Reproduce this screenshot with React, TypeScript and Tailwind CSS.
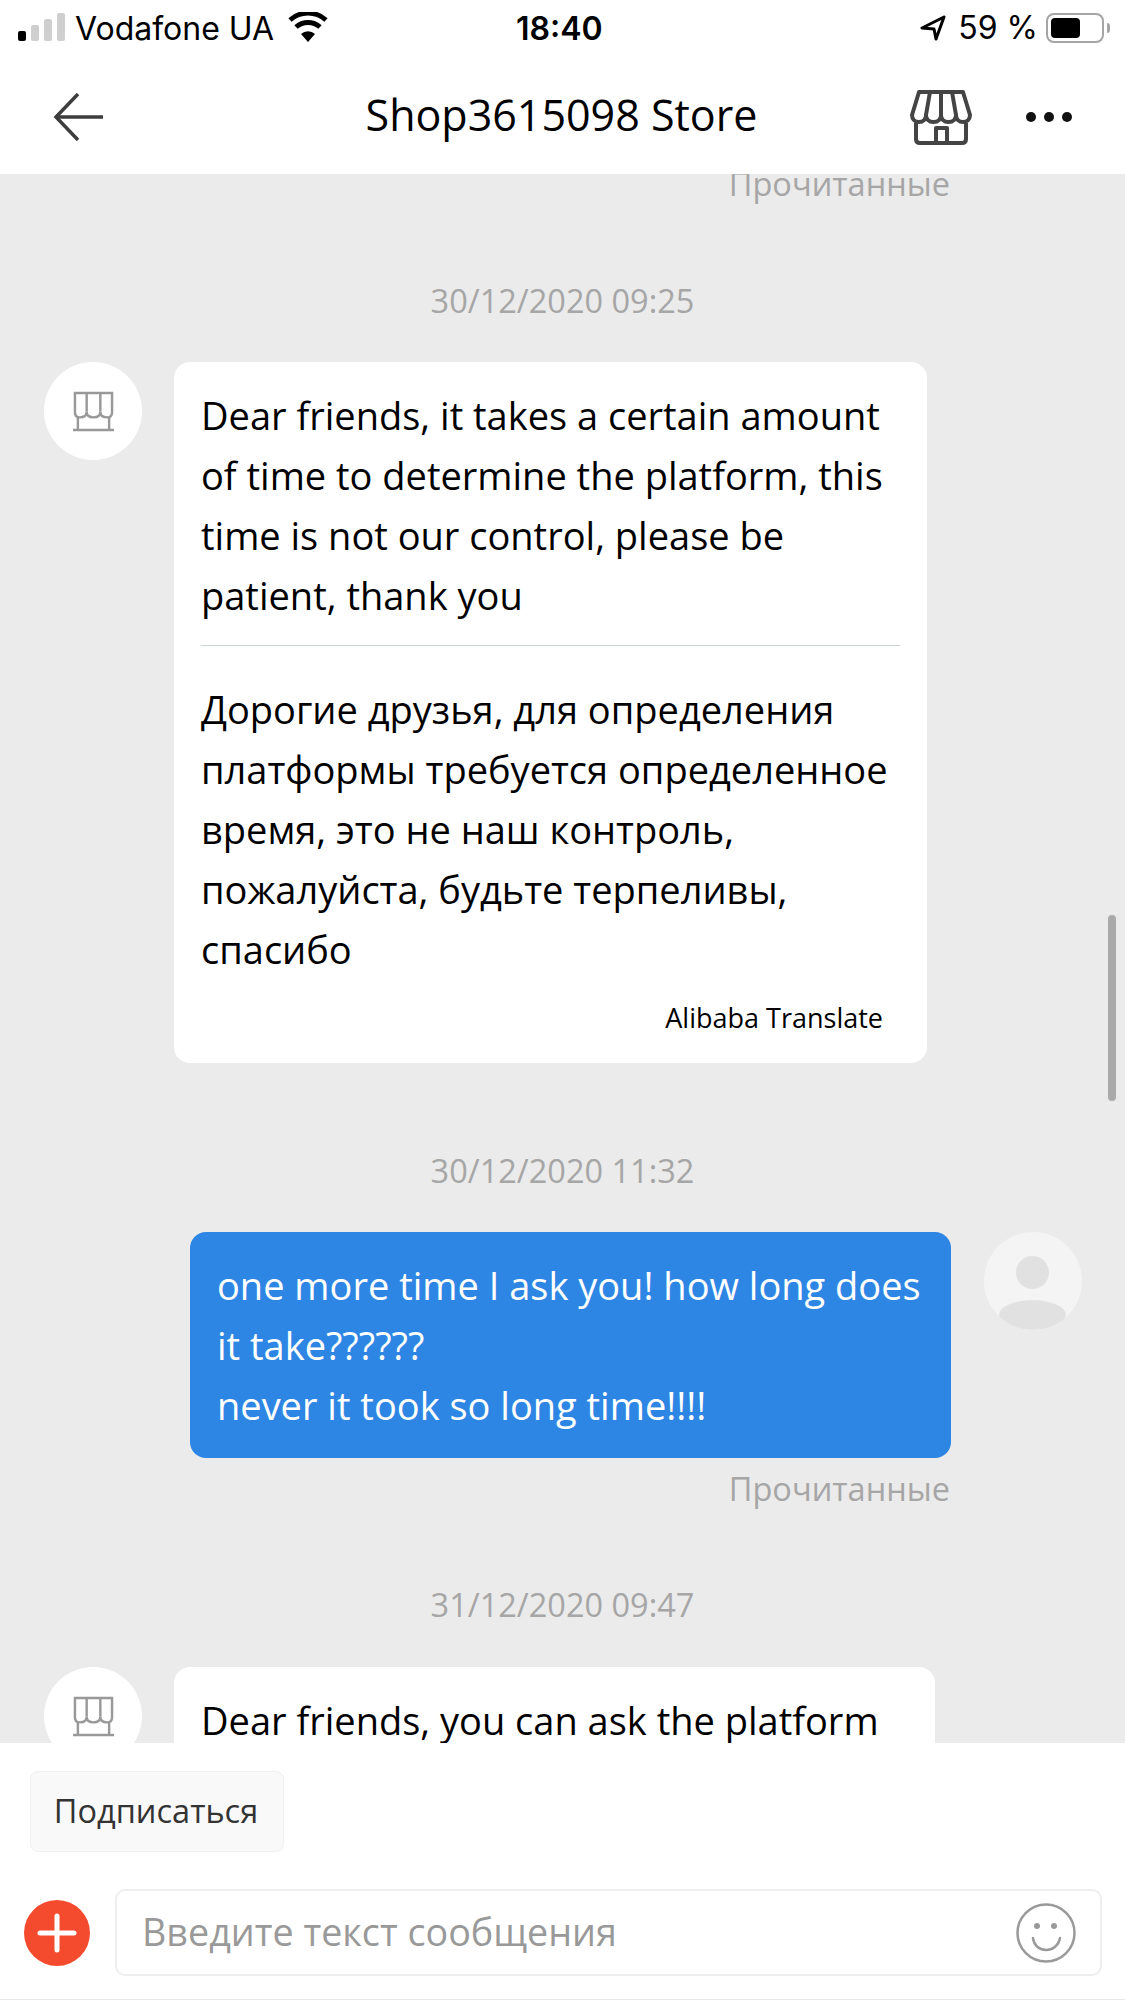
const FONT = 'font-["Open_Sans","Noto_Sans",sans-serif]';

function StoreOutline() {
  return (
    <svg width="62" height="55" viewBox="0 0 62 55" fill="none" stroke="#444444" strokeWidth="4" strokeLinejoin="round">
      <path d="M9 2H53L60 25c0 4-3 7-7 7s-7-3-7-7c0 4-3 7-7.500 7S31 29 31 25c0 4-3 7-7.500 7S16 29 16 25c0 4-3 7-7 7s-7-3-7-7Z" />
      <path d="M20 2 16 25M31 2V25M42 2 46 25" />
      <path d="M6 33V49q0 4 4 4H52q4 0 4-4V33M26 53V38H37V53" />
    </svg>
  );
}

function ShopAvatar() {
  return (
    <div className="flex h-[98px] w-[98px] shrink-0 items-center justify-center rounded-full bg-white">
      <svg width="43" height="41" viewBox="0 0 44 42" fill="none" stroke="#999999" strokeWidth="2.500">
        <path d="M3 2h38v20c0 3-2 5-5 5-4 0-7-2-7-6 0 4-3 6-7 6s-7-2-7-6c0 4-3 6-7 6-3 0-5-2-5-5V2z" />
        <path d="M15 2v19M29 2v19M6 27v13M38 27v13M1 40h42" />
      </svg>
    </div>
  );
}

function UserAvatar() {
  return (
    <div className="relative h-[98px] w-[98px] shrink-0 overflow-hidden rounded-full bg-[#f4f4f4]">
      <div className="absolute left-[32px] top-[24px] h-[33px] w-[33px] rounded-full bg-[#e1e1e1]" />
      <div className="absolute left-[15px] top-[68px] h-[30px] w-[67px] rounded-[50%] bg-[#e1e1e1]" />
    </div>
  );
}

function Timestamp({ children }: { children: string }) {
  return <p className="text-center text-[32.5px] leading-[40px] text-[#a6a6a6]">{children}</p>;
}

export default function App() {
  return (
    <div className={`flex h-[2000px] w-[1125px] flex-col overflow-hidden bg-white ${FONT}`}>
      {/* status bar */}
      <div className='relative flex h-[60px] shrink-0 items-center pl-[18px] pr-[15px] font-["Inter",sans-serif] text-[32px] text-black'>
        <div className="flex -translate-y-[3px] items-end gap-[5px]">
          <span className="h-[10px] w-[8px] rounded-[2px] bg-black" />
          <span className="h-[16px] w-[8px] rounded-[2px] bg-[#cfcfcf]" />
          <span className="h-[22px] w-[8px] rounded-[2px] bg-[#cfcfcf]" />
          <span className="h-[28px] w-[8px] rounded-[2px] bg-[#cfcfcf]" />
        </div>
        <span className="ml-[10px] -translate-y-[1px]">Vodafone UA</span>
        <svg className="ml-[13px] -translate-y-[3px]" width="42" height="30" viewBox="0 0 42 30">
          <path d="M21 30l-7-8a10 10 0 0 1 14 0z" fill="#000" />
          <path d="M9 15a18 18 0 0 1 24 0M3 8a27 27 0 0 1 36 0" fill="none" stroke="#000" strokeWidth="5" />
        </svg>
        <span className="absolute left-[516px] -translate-y-[1px] font-semibold">18:40</span>
        <div className="ml-auto flex -translate-y-[2px] items-center">
          <svg width="26" height="26" viewBox="0 0 26 26" fill="none" stroke="#000" strokeWidth="3">
            <path d="M24 2 2 13l12 1 2 10z" strokeLinejoin="round" />
          </svg>
          <span className="ml-[12px]">59 %</span>
          <div className="ml-[8px] flex h-[30px] w-[58px] items-center rounded-[8px] border-2 border-[#a5a5a5] p-[3px]">
            <div className="h-full w-[29px] rounded-[4px] bg-black" />
          </div>
          <div className="ml-[3px] h-[10px] w-[3px] rounded-r bg-[#a5a5a5]" />
        </div>
      </div>

      {/* nav */}
      <div className="relative flex h-[114px] shrink-0 items-center pl-[53px] pr-[53px]">
        <svg width="50" height="48" viewBox="0 0 50 48" fill="none" stroke="#3d3d3d" strokeWidth="3.500">
          <path d="M25 1L3 24l22 23" />
          <path d="M3 24h47" />
        </svg>
        <h1 className="absolute left-0 right-[2px] top-[25px] text-center text-[43px] leading-[60px] text-black">
          Shop3615098 Store
        </h1>
        <div className="ml-auto flex items-center gap-[54px]">
          <StoreOutline />
          <div className="flex gap-[8px]">
            <span className="h-[10px] w-[10px] rounded-full bg-[#111]" />
            <span className="h-[10px] w-[10px] rounded-full bg-[#111]" />
            <span className="h-[10px] w-[10px] rounded-full bg-[#111]" />
          </div>
        </div>
      </div>

      {/* chat */}
      <div className="relative min-h-0 flex-1 overflow-hidden bg-[#ebebeb]">
        <div className="absolute right-[9px] top-[741px] h-[186px] w-[8px] rounded bg-[#a9a9a9]" />
        <p className="mt-[-10px] pr-[175px] text-right text-[32.5px] leading-[40px] text-[#a6a6a6]">Прочитанные</p>
        <div className="mt-[77px]">
          <Timestamp>30/12/2020 09:25</Timestamp>
        </div>
        <div className="mt-[41px] flex gap-[32px] pl-[44px]">
          <ShopAvatar />
          <div className="w-[753px] rounded-[16px] bg-white px-[27px] pb-[25px] pt-[23px] text-[38px] leading-[60px] text-black">
            <p className="border-b border-[#c9d3cf] pb-[20px]">
              Dear friends, it takes a certain amount of time to determine the platform, this time is not our control, please be patient, thank you
            </p>
            <p className="pt-[33px]">
              Дорогие друзья, для определения платформы требуется определенное время, это не наш контроль, пожалуйста, будьте терпеливы, спасибо
            </p>
            <p className="mt-[19px] pr-[17px] text-right text-[27px] leading-[40px]">Alibaba Translate</p>
          </div>
        </div>

        <div className="mt-[88px]">
          <Timestamp>30/12/2020 11:32</Timestamp>
        </div>
        <div className="mt-[41px] flex justify-end gap-[33px] pr-[43px]">
          <div className="w-[761px] rounded-[16px] bg-[#2e86e4] px-[27px] py-[23px] text-[38px] leading-[60px] text-white">
            one more time I ask you! how long does it take??????
            <br />
            never it took so long time!!!!
          </div>
          <UserAvatar />
        </div>
        <p className="mt-[11px] pr-[175px] text-right text-[32.5px] leading-[40px] text-[#a6a6a6]">Прочитанные</p>

        <div className="pt-[76px]">
          <Timestamp>31/12/2020 09:47</Timestamp>
        </div>
        <div className="mt-[42px] flex gap-[32px] pl-[44px]">
          <ShopAvatar />
          <div className="w-[761px] rounded-[16px] bg-white px-[27px] pb-[60px] pt-[23px] text-[38px] leading-[60px] text-black">
            Dear friends, you can ask the platform
          </div>
        </div>
      </div>

      {/* bottom bar */}
      <div className="flex h-[257px] shrink-0 flex-col border-b border-[#e8e8e8] bg-white">
        <div className="ml-[30px] mt-[28px] flex h-[81px] w-[254px] items-center justify-center rounded-[8px] border border-[#f0f0f0] bg-[#f9f9f9] pr-[2px] text-[32.5px] text-[#333]">
          Подписаться
        </div>
        <div className="mt-[37px] flex items-center gap-[25px] pl-[24px] pr-[23px]">
          <div className="flex h-[66px] w-[66px] shrink-0 items-center justify-center rounded-full bg-[#f44a2e]">
            <svg width="40" height="40" viewBox="0 0 40 40" stroke="#fff" strokeWidth="5" strokeLinecap="round">
              <path d="M20 3v34M3 20h34" />
            </svg>
          </div>
          <div className="flex h-[87px] flex-1 items-center rounded-[10px] border-2 border-[#eeeeee] pl-[25px] pr-[24px] text-[37.700px] text-[#999999]">
            Введите текст сообщения
            <svg className="ml-auto" width="60" height="60" viewBox="0 0 60 60" fill="none" stroke="#9a9a9a" strokeWidth="2.500">
              <circle cx="30" cy="30" r="28.500" />
              <path d="M17 35c2 16 24 16 27 0" strokeLinecap="round" />
              <circle cx="21" cy="23" r="3" fill="#9a9a9a" stroke="none" />
              <circle cx="38" cy="23" r="3" fill="#9a9a9a" stroke="none" />
            </svg>
          </div>
        </div>
      </div>
    </div>
  );
}
